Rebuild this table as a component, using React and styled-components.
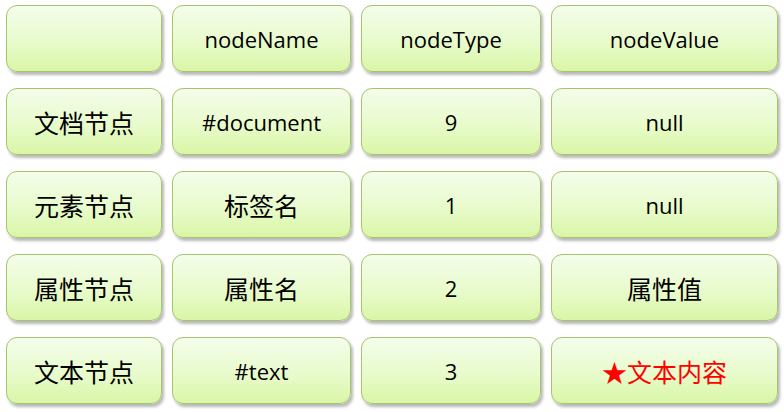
import styled, { createGlobalStyle } from 'styled-components'

const GlobalStyle = createGlobalStyle`
  html, body {
    margin: 0;
    padding: 0;
    background: #ffffff;
  }
`

const rows = [
  ['', 'nodeName', 'nodeType', 'nodeValue'],
  ['文档节点', '#document', '9', 'null'],
  ['元素节点', '标签名', '1', 'null'],
  ['属性节点', '属性名', '2', '属性值'],
  ['文本节点', '#text', '3', '★文本内容'],
]

// 中文单元格字号略大
const isCjk = (text) => /[\u4e00-\u9fff]/.test(text)

const App = () => {
  return (
    <>
      <GlobalStyle />
      <Page>
        <Table>
          {rows.map((row, r) =>
            row.map((text, c) => (
              <Cell
                key={`${r}-${c}`}
                $cjk={isCjk(text)}
                $highlight={r === 4 && c === 3}
              >
                {text}
              </Cell>
            ))
          )}
        </Table>
      </Page>
    </>
  )
}

export default App

const Page = styled.div`
  width: 784px;
  height: 412px;
  padding: 5px 0 0 6px;
  box-sizing: border-box;
  background: #ffffff;
`

const Table = styled.div`
  display: grid;
  grid-template-columns: 156px 179px 180px 227px;
  grid-auto-rows: 67px;
  column-gap: 10px;
  row-gap: 16px;
`

const Cell = styled.div`
  box-sizing: border-box;
  display: flex;
  align-items: center;
  justify-content: center;

  border: 1.5px solid #a6c46e;
  border-radius: 11px;
  background: linear-gradient(to bottom, #f4fdea 0%, #e8fbcc 55%, #d9f6a6 100%);
  box-shadow: 2px 3px 3px rgba(0, 0, 0, 0.28);

  font-family: 'Open Sans', 'Noto Sans CJK SC', sans-serif;
  font-size: ${(p) => (p.$cjk ? '25px' : '22px')};
  color: ${(p) => (p.$highlight ? '#ff0000' : '#000000')};
`
